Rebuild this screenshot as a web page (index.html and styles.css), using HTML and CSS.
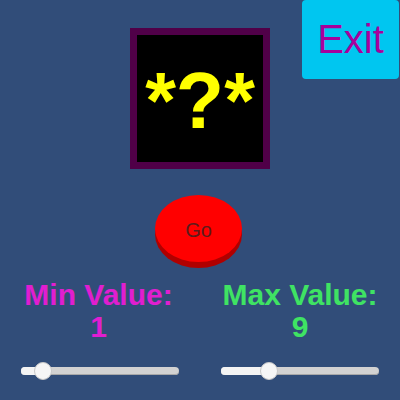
FILE: index.html
```html
<!DOCTYPE html>
<html>
<head>
<meta charset="utf-8">
<link rel="stylesheet" href="styles.css">
</head>
<body>
<div class="screen">
  <div class="top">
    <div class="spacer"></div>
    <div class="mystery"><span class="mystery-text">*?*</span></div>
    <button class="exit">Exit</button>
  </div>
  <div class="go-row">
    <button class="go">Go</button>
  </div>
  <div class="controls">
    <div class="control">
      <div class="label min">Min Value:<br>1</div>
      <div class="slider">
        <div class="fill" style="width:22px"></div>
        <div class="handle" style="left:22px"></div>
      </div>
    </div>
    <div class="control">
      <div class="label max">Max Value:<br>9</div>
      <div class="slider">
        <div class="fill" style="width:48px"></div>
        <div class="handle" style="left:48px"></div>
      </div>
    </div>
  </div>
</div>
</body>
</html>
```
FILE: styles.css
```css
html, body {
  margin: 0;
  padding: 0;
  width: 400px;
  height: 400px;
  overflow: hidden;
  background: #314d79;
  font-family: "Liberation Sans", Arial, sans-serif;
}
.screen {
  width: 400px;
  height: 400px;
}
.top {
  display: grid;
  grid-template-columns: 1fr 140px 1fr;
  align-items: start;
}
.mystery {
  margin-top: 28px;
  width: 140px;
  height: 141px;
  box-sizing: border-box;
  border: 7px solid #500048;
  background: #000;
  display: flex;
  align-items: center;
  justify-content: center;
}
.mystery-text {
  color: #ffff00;
  font-weight: bold;
  font-size: 79px;
  line-height: 1;
  margin-top: 3px;
}
.exit {
  justify-self: end;
  margin-right: 1px;
  width: 97px;
  height: 79px;
  border: none;
  border-radius: 4px;
  background: #00c6f0;
  color: #a8009c;
  font-family: "Liberation Sans", Arial, sans-serif;
  font-size: 40px;
  padding: 0;
  display: flex;
  align-items: center;
  justify-content: center;
}
.go-row {
  display: flex;
  justify-content: center;
  margin-top: 26px;
}
.go {
  width: 87px;
  height: 67px;
  margin-left: -3px;
  border: none;
  border-radius: 50%;
  background: #ff0000;
  box-shadow: 0 6px 0 #b00000;
  color: #5a1c1c;
  font-family: "Liberation Sans", Arial, sans-serif;
  font-size: 20px;
  padding: 4px 0 0 0;
}
.controls {
  margin-top: 17px;
  display: grid;
  grid-template-columns: 1fr 1fr;
}
.control {
  display: flex;
  flex-direction: column;
  align-items: center;
}
.label {
  font-weight: bold;
  font-size: 30px;
  line-height: 32px;
  text-align: center;
}
.label.min {
  color: #e01ed0;
  margin-left: -3px;
}
.label.max {
  color: #3fe363;
}
.slider {
  position: relative;
  margin-top: 24px;
  width: 158px;
  height: 8px;
  border-radius: 4px;
  background: #d2d2d2;
  box-shadow: inset 0 -1px 0 #a8a8a8;
}
.fill {
  height: 8px;
  border-radius: 4px 0 0 4px;
  background: #f4f4f4;
}
.handle {
  position: absolute;
  top: -5px;
  width: 18px;
  height: 18px;
  margin-left: -9px;
  box-sizing: border-box;
  border-radius: 50%;
  background: #f6f6f6;
  border: 1px solid #c8c8c8;
}
```
